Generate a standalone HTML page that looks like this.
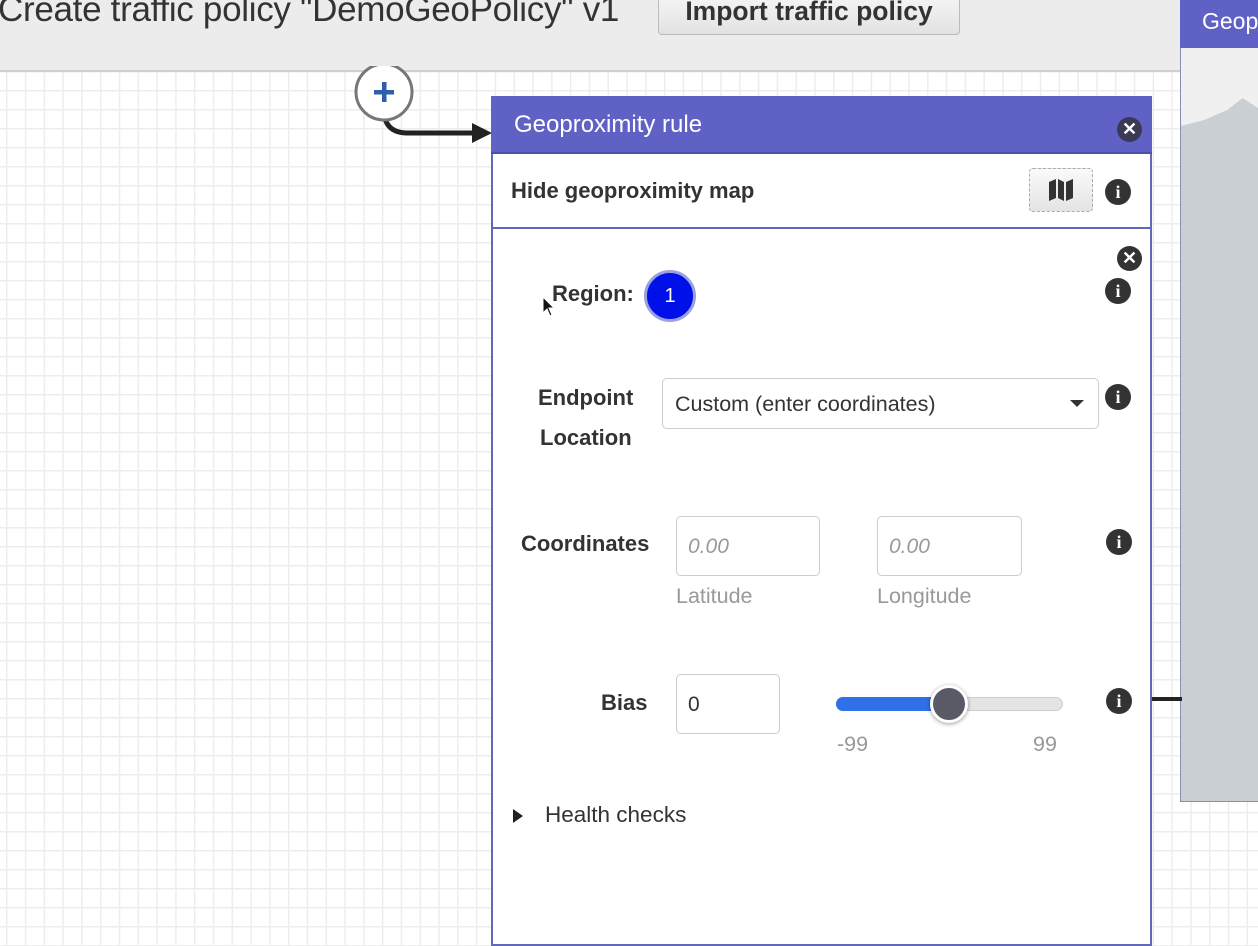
<!DOCTYPE html>
<html><head><meta charset="utf-8"><style>
*{box-sizing:border-box;margin:0;padding:0}
body{width:1258px;height:938px;overflow:hidden;position:relative;font-family:"Liberation Sans",sans-serif;
background-color:#fff;
background-image:linear-gradient(to right,#ededed 1.5px,transparent 1.5px),linear-gradient(to bottom,#ededed 1.5px,transparent 1.5px);
background-size:18.8px 19px;background-position:6px 14px;}
.abs{position:absolute}
.top{left:0;top:0;width:1180px;height:72px;background:#ececec;border-bottom:2px solid #cfcfcf}
.title{left:-2px;top:-10px;font-size:35px;color:#333;white-space:nowrap;letter-spacing:-0.3px}
.btn{left:658px;top:-10px;width:302px;height:45px;border:1px solid #bbb;border-radius:4px;background:linear-gradient(#f8f8f8,#e2e2e2);font-weight:bold;font-size:26.5px;color:#333;text-align:center;line-height:40px;white-space:nowrap}
.info{width:26px;height:26px;border-radius:50%;background:#333;color:#fff;font:bold 18px "Liberation Serif",serif;text-align:center;line-height:26px}
.x{width:25px;height:25px;border-radius:50%;background:#333;color:#fff;font:bold 18px "Liberation Sans",sans-serif;text-align:center;line-height:24px}
.lbl{font-weight:bold;font-size:22px;color:#333;white-space:nowrap}
.inp{border:1px solid #ccc;border-radius:5px;background:#fff}
.ph{font-style:italic;color:#999;font-size:21px}
.sub{color:#999;font-size:21.5px}
</style></head><body>
<div class="abs top"></div>
<div class="abs title">Create traffic policy "DemoGeoPolicy" v1</div>
<div class="abs btn">Import traffic policy</div>

<div class="abs" style="left:1180px;top:0;width:78px;height:802px;background:#c9cfd3;border-left:1px solid #8a8fb0;border-bottom:1px solid #8a8fb0"></div>
<div class="abs" style="left:1181px;top:48px;width:77px;height:100px;background:#f0f0f0;clip-path:polygon(0 0,100% 0,100% 60%,80% 50%,60% 62%,30% 72%,0 78%)"></div>
<div class="abs" style="left:1180px;top:0;width:78px;height:48px;background:#5f62c4;color:#fff;font-size:23px;padding:8px 0 0 22px;white-space:nowrap;overflow:hidden">Geoproximity</div>

<svg class="abs" style="left:350px;top:66px" width="150" height="80">
<path d="M34 44 Q34 66 56 67 L128 67" stroke="#222" stroke-width="5" fill="none"/>
<polygon points="122,57 142,67 122,77" fill="#222"/>
<circle cx="34" cy="26" r="28" fill="#fff" stroke="#777" stroke-width="3"/>
<rect x="32" y="16" width="4.5" height="20" fill="#2f5fa8"/><rect x="24" y="24" width="20" height="4.5" fill="#2f5fa8"/>
</svg>
<svg class="abs" style="left:1150px;top:696px" width="32" height="8"><rect x="0" y="1" width="32" height="4" fill="#222"/></svg>

<div class="abs" style="left:491px;top:96px;width:661px;height:850px;background:#fff;border:2px solid #6468b8"></div>
<div class="abs" style="left:491px;top:96px;width:661px;height:58px;background:#5f62c4;border-bottom:2px solid #4d50a8"></div>
<div class="abs" style="left:514px;top:111px;color:#fff;font-size:24px">Geoproximity rule</div>
<div class="abs x" style="left:1117px;top:117px;background:#3a3a55">✕</div>
<div class="abs" style="left:493px;top:227px;width:657px;height:2px;background:#6468b8"></div>
<div class="abs lbl" style="left:511px;top:178px">Hide geoproximity map</div>
<div class="abs" style="left:1029px;top:168px;width:64px;height:44px;border:1px dashed #aaa;border-radius:4px;background:linear-gradient(#fafafa,#e4e4e4)"></div>
<svg class="abs" style="left:1048px;top:178px" width="26" height="24"><path d="M1 4 L8 1 L8 20 L1 23Z M10 1 L16 4 L16 23 L10 20Z M18 4 L25 1 L25 20 L18 23Z" fill="#333"/></svg>
<div class="abs info" style="left:1105px;top:179px">i</div>

<div class="abs x" style="left:1117px;top:246px">✕</div>
<div class="abs lbl" style="left:552px;top:281px">Region:</div>
<div class="abs" style="left:644px;top:270px;width:52px;height:52px;border-radius:50%;background:#0010e8;border:3px solid #9aa0e0;color:#fff;font-size:20px;text-align:center;line-height:46px">1</div>
<svg class="abs" style="left:542px;top:296px" width="14" height="22"><path d="M1 1 L1 17 L5 13 L8 20 L10 19 L7 12 L12 12Z" fill="#111" stroke="#fff" stroke-width="1"/></svg>
<div class="abs info" style="left:1105px;top:278px">i</div>

<div class="abs lbl" style="left:538px;top:385px">Endpoint</div>
<div class="abs lbl" style="left:540px;top:425px">Location</div>
<div class="abs inp" style="left:662px;top:378px;width:437px;height:51px"></div>
<div class="abs" style="left:675px;top:392px;font-size:21.5px;color:#333;white-space:nowrap">Custom (enter coordinates)</div>
<svg class="abs" style="left:1069px;top:399px" width="16" height="10"><polygon points="1,1 15,1 8,8" fill="#333"/></svg>
<div class="abs info" style="left:1105px;top:384px">i</div>

<div class="abs lbl" style="left:521px;top:531px">Coordinates</div>
<div class="abs inp" style="left:676px;top:516px;width:144px;height:60px"></div>
<div class="abs ph" style="left:688px;top:535px">0.00</div>
<div class="abs inp" style="left:877px;top:516px;width:145px;height:60px"></div>
<div class="abs ph" style="left:889px;top:535px">0.00</div>
<div class="abs sub" style="left:676px;top:584px">Latitude</div>
<div class="abs sub" style="left:877px;top:584px">Longitude</div>
<div class="abs info" style="left:1106px;top:529px">i</div>

<div class="abs lbl" style="left:601px;top:690px">Bias</div>
<div class="abs inp" style="left:676px;top:674px;width:104px;height:60px"></div>
<div class="abs" style="left:688px;top:693px;font-size:21px;color:#333">0</div>
<div class="abs" style="left:836px;top:697px;width:227px;height:14px;border-radius:7px;background:#e4e4e4;border:1px solid #ccc"></div>
<div class="abs" style="left:836px;top:697px;width:115px;height:14px;border-radius:7px;background:#2f6fe8"></div>
<div class="abs" style="left:930px;top:685px;width:38px;height:38px;border-radius:50%;background:#5a5a66;border:3px solid #fff;box-shadow:0 1px 4px rgba(0,0,0,.4)"></div>
<div class="abs sub" style="left:837px;top:732px">-99</div>
<div class="abs sub" style="left:1033px;top:732px">99</div>
<div class="abs info" style="left:1106px;top:688px">i</div>

<svg class="abs" style="left:512px;top:808px" width="12" height="16"><polygon points="1,1 11,8 1,15" fill="#222"/></svg>
<div class="abs" style="left:545px;top:802px;font-size:22.5px;color:#333">Health checks</div>
</body></html>
